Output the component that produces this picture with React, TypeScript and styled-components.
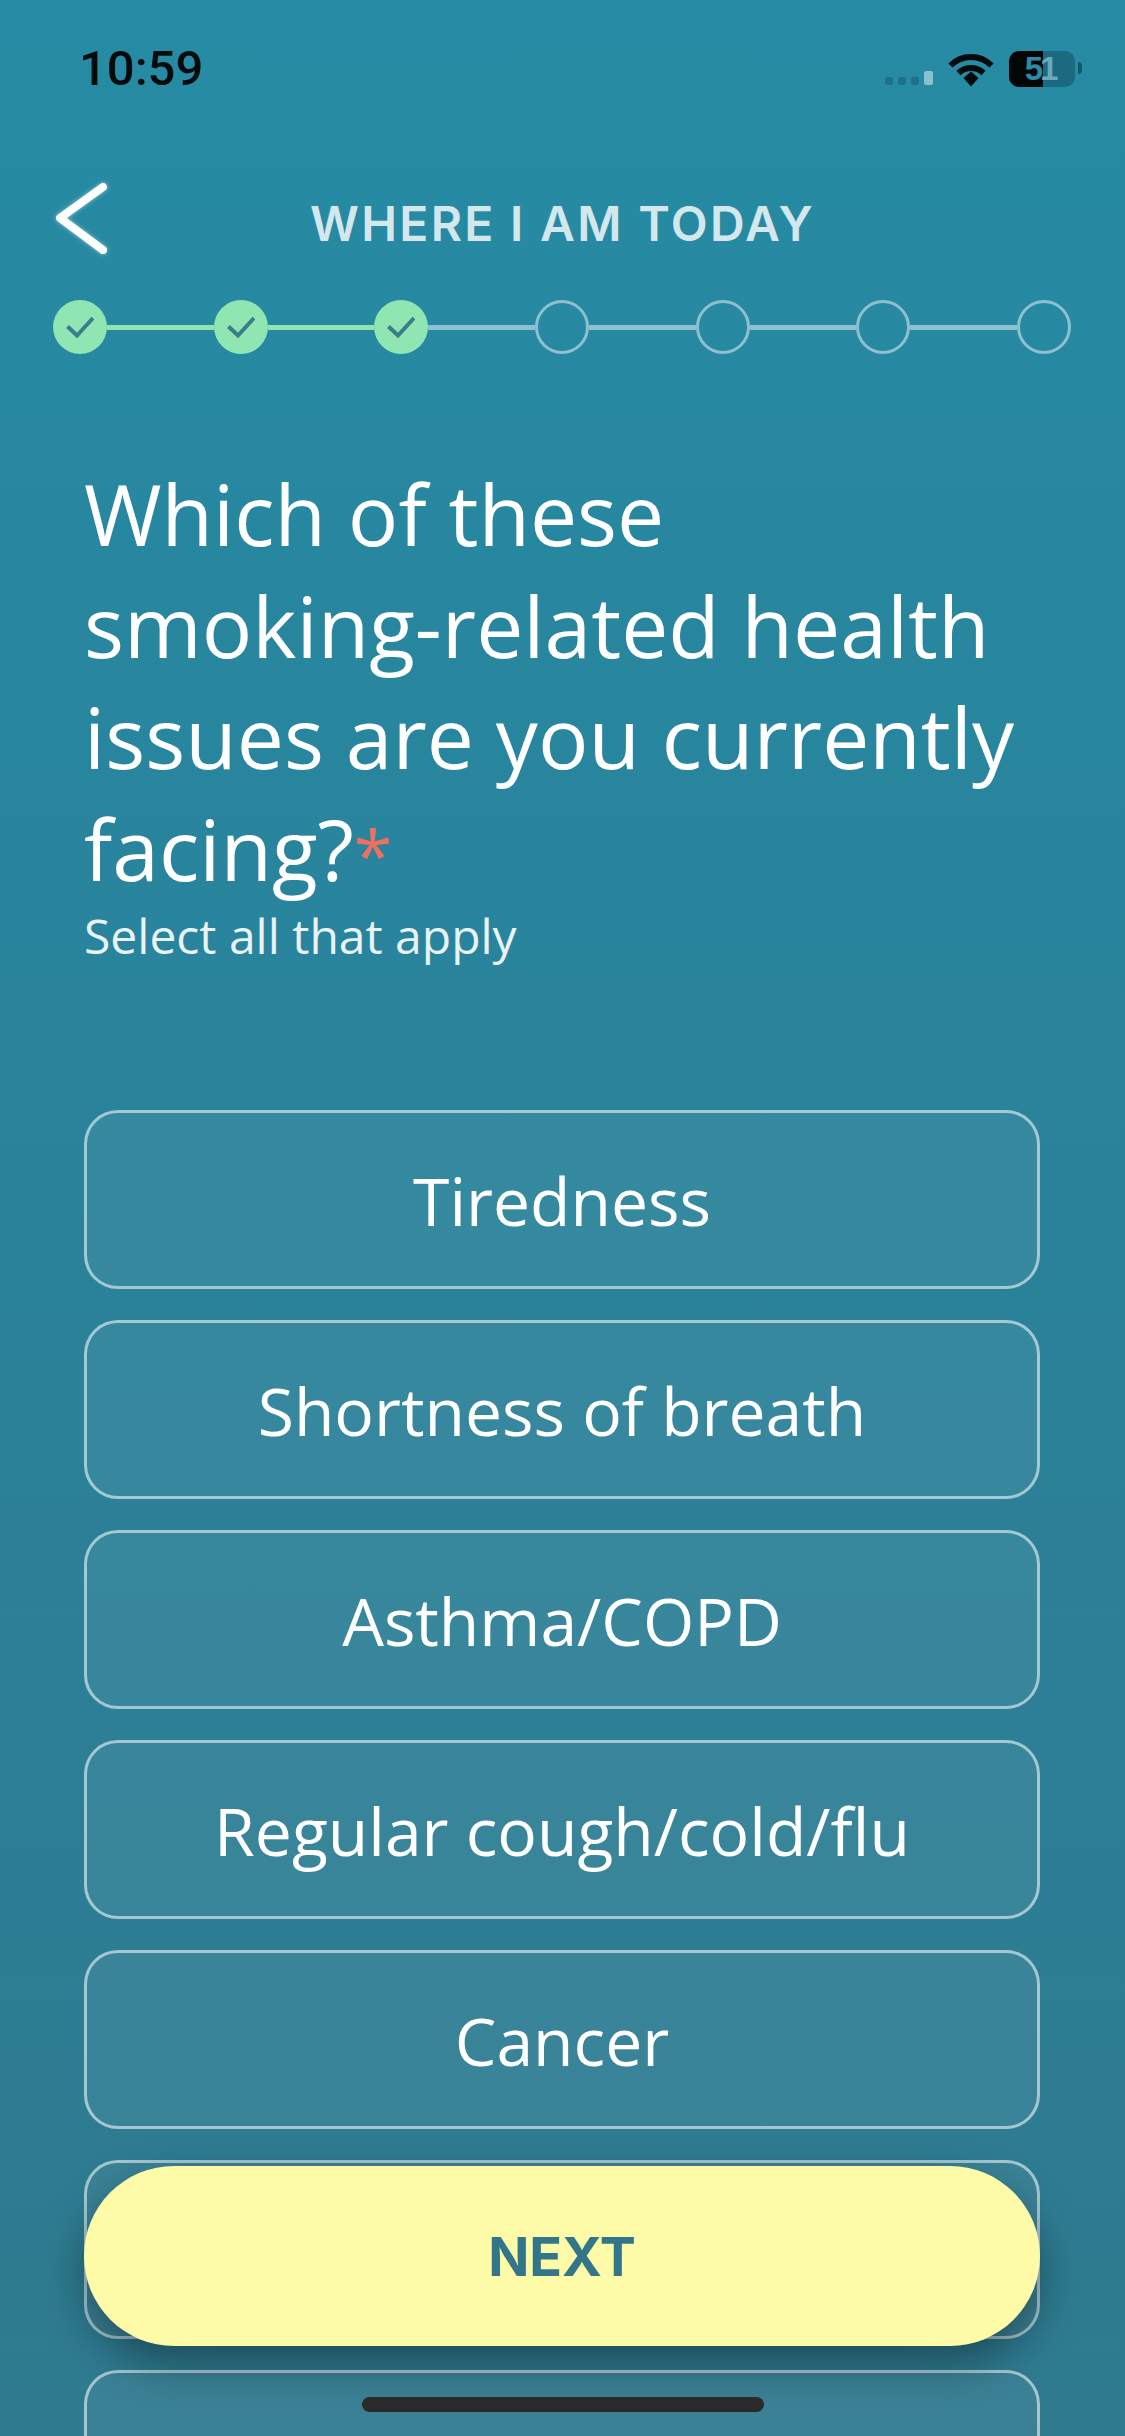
import { Fragment } from "react";
import styled, { createGlobalStyle } from "styled-components";

const GlobalStyle = createGlobalStyle`
  html, body {
    margin: 0;
    padding: 0;
  }

  * {
    box-sizing: border-box;
  }
`;

const Screen = styled.div`
  position: relative;
  width: 1125px;
  height: 2436px;
  overflow: hidden;
  background: linear-gradient(180deg, #268ba4 0%, #29839b 45%, #2f7a8f 100%);
  font-family: "Open Sans", sans-serif;
  color: #fff;
`;

const StatusBar = styled.div`
  height: 174px;
  padding: 46px 43px 0 79px;
  display: flex;
  justify-content: space-between;
  align-items: flex-start;
`;

const Time = styled.span`
  font-family: "Roboto", sans-serif;
  font-weight: 500;
  font-size: 49px;
  line-height: 46px;
  color: #050b0d;
`;

const StatusIcons = styled.div`
  position: relative;
  display: flex;
  align-items: flex-end;
  height: 41px;
`;

const Signal = styled.div`
  display: flex;
  align-items: flex-end;
  gap: 5px;
  margin-right: 15px;
  padding-bottom: 2px;
`;

const SignalBar = styled.span<{ $on?: boolean }>`
  width: ${(p) => (p.$on ? 9 : 8)}px;
  height: ${(p) => (p.$on ? 14 : 8)}px;
  border-radius: 2px;
  background: ${(p) => (p.$on ? "#8dbfcc" : "#1f7088")};
`;

const Battery = styled.div`
  width: 66px;
  height: 36px;
  margin-left: 15px;
  margin-right: 7px;
  border-radius: 10px;
  overflow: hidden;
  background: #1b6a80;
  display: flex;
  font-family: "Liberation Sans", sans-serif;
  font-weight: 700;
  font-size: 33px;
  line-height: 36px;
`;

const BatteryLeft = styled.span`
  width: 34px;
  background: #030607;
  color: #2b8ba8;
  text-align: right;
`;

const BatteryRight = styled.span`
  color: #6aa9bb;
  margin-left: -3px;
`;

const BatteryNub = styled.span`
  position: absolute;
  right: 0;
  top: 16px;
  width: 4px;
  height: 12px;
  border-radius: 0 4px 4px 0;
  background: #12586b;
`;

const Header = styled.div`
  display: grid;
  grid-template-columns: 1fr auto 1fr;
  align-items: center;
  height: 90px;
  padding: 0 54px;
`;

const BackButton = styled.button`
  width: 60px;
  height: 80px;
  padding: 0;
  border: none;
  background: none;
  display: flex;
  filter: drop-shadow(0 0 2px rgba(255, 255, 255, 0.5));
`;

const Title = styled.h1`
  margin: 8px 0 0;
  font-family: "Inter", sans-serif;
  font-weight: 600;
  font-size: 48px;
  letter-spacing: 2.3px;
  color: #d3e7ed;
  white-space: nowrap;
`;

const Stepper = styled.div`
  display: flex;
  justify-content: space-between;
  margin: 36px 54px 0 53px;
`;

const StepLine = styled.span<{ $done: boolean }>`
  flex: 1;
  height: 5px;
  align-self: center;
  background: ${(p) => (p.$done ? "#90e6b2" : "#8fc0cf")};
`;

const StepDot = styled.span<{ $done: boolean }>`
  width: 54px;
  height: 54px;
  flex: none;
  border-radius: 50%;
  display: flex;
  align-items: center;
  justify-content: center;
  background: ${(p) => (p.$done ? "#90e6b2" : "transparent")};
  border: ${(p) => (p.$done ? "none" : "3px solid #8fc0cf")};
`;

const Question = styled.div`
  padding: 0 84px;
  margin-top: 104px;
`;

const Heading = styled.h2`
  margin: 0;
  font-weight: 400;
  font-size: 84px;
  line-height: 111.5px;
`;

const Required = styled.span`
  color: #f0705f;
  font-size: 70px;
  line-height: 1;
`;

const Hint = styled.p`
  margin: 2px 0 0;
  font-size: 48px;
  line-height: 60px;
  color: #e9f3f6;
`;

const Options = styled.div`
  display: flex;
  flex-direction: column;
  gap: 31px;
  padding: 0 85px 0 84px;
  margin-top: 144px;
`;

const Option = styled.div`
  height: 179px;
  flex: none;
  border: 3px solid rgba(255, 255, 255, 0.55);
  border-radius: 34px;
  background: rgba(255, 255, 255, 0.06);
  display: flex;
  align-items: center;
  justify-content: center;
  font-size: 66px;
`;

const NextButton = styled.button`
  position: absolute;
  left: 84px;
  top: 2166px;
  width: 956px;
  height: 180px;
  border: none;
  border-radius: 90px;
  background: #fdfaa8;
  box-shadow: 0 18px 44px rgba(0, 0, 0, 0.38);
  font-family: "Inter", sans-serif;
  font-weight: 700;
  font-size: 54px;
  color: #33768a;
`;

const HomeIndicator = styled.span`
  position: absolute;
  left: 362px;
  top: 2397px;
  width: 402px;
  height: 15px;
  border-radius: 8px;
  background: #2a2a2a;
`;

const steps = [true, true, true, false, false, false, false];
const options = [
  "Tiredness",
  "Shortness of breath",
  "Asthma/COPD",
  "Regular cough/cold/flu",
  "Cancer",
  "",
  "",
];

const Check = () => (
  <svg width="28" height="22" viewBox="0 0 28 22" fill="none">
    <path d="M1.5 10.5 L11 19.5 L27 2" stroke="#3a7d8c" strokeWidth="4" />
  </svg>
);

const App = () => {
  return (
    <Screen>
      <GlobalStyle />
      <StatusBar>
        <Time>10:59</Time>
        <StatusIcons>
          <Signal>
            <SignalBar />
            <SignalBar />
            <SignalBar />
            <SignalBar $on />
          </Signal>
          <svg width="46" height="34" viewBox="0 0 46 34" fill="none">
            <path d="M2.5 12.5 A29 29 0 0 1 43.5 12.5" stroke="#050b0d" strokeWidth="6" />
            <path d="M10.5 20 A18 18 0 0 1 35.5 20" stroke="#050b0d" strokeWidth="6" />
            <path d="M15.5 25 L23 18.5 L30.5 25 L23 33.5 Z" fill="#050b0d" />
          </svg>
          <Battery>
            <BatteryLeft>5</BatteryLeft>
            <BatteryRight>1</BatteryRight>
          </Battery>
          <BatteryNub />
        </StatusIcons>
      </StatusBar>

      <Header>
        <BackButton>
          <svg width="60" height="80" viewBox="0 0 60 80" fill="none">
            <path d="M49 8 L6 39 L49 71" stroke="#fff" strokeWidth="8" strokeLinecap="round" strokeLinejoin="round" />
          </svg>
        </BackButton>
        <Title>WHERE I AM TODAY</Title>
      </Header>

      <Stepper>
        {steps.map((done, i) => (
          <Fragment key={i}>
            <StepDot $done={done}>{done && <Check />}</StepDot>
            {i < steps.length - 1 && <StepLine $done={done && steps[i + 1]} />}
          </Fragment>
        ))}
      </Stepper>

      <Question>
        <Heading>
          Which of these smoking-related health issues are you currently facing?
          <Required>*</Required>
        </Heading>
        <Hint>Select all that apply</Hint>
      </Question>

      <Options>
        {options.map((label, i) => (
          <Option key={i}>{label}</Option>
        ))}
      </Options>

      <NextButton>NEXT</NextButton>
      <HomeIndicator />
    </Screen>
  );
};

export default App;
